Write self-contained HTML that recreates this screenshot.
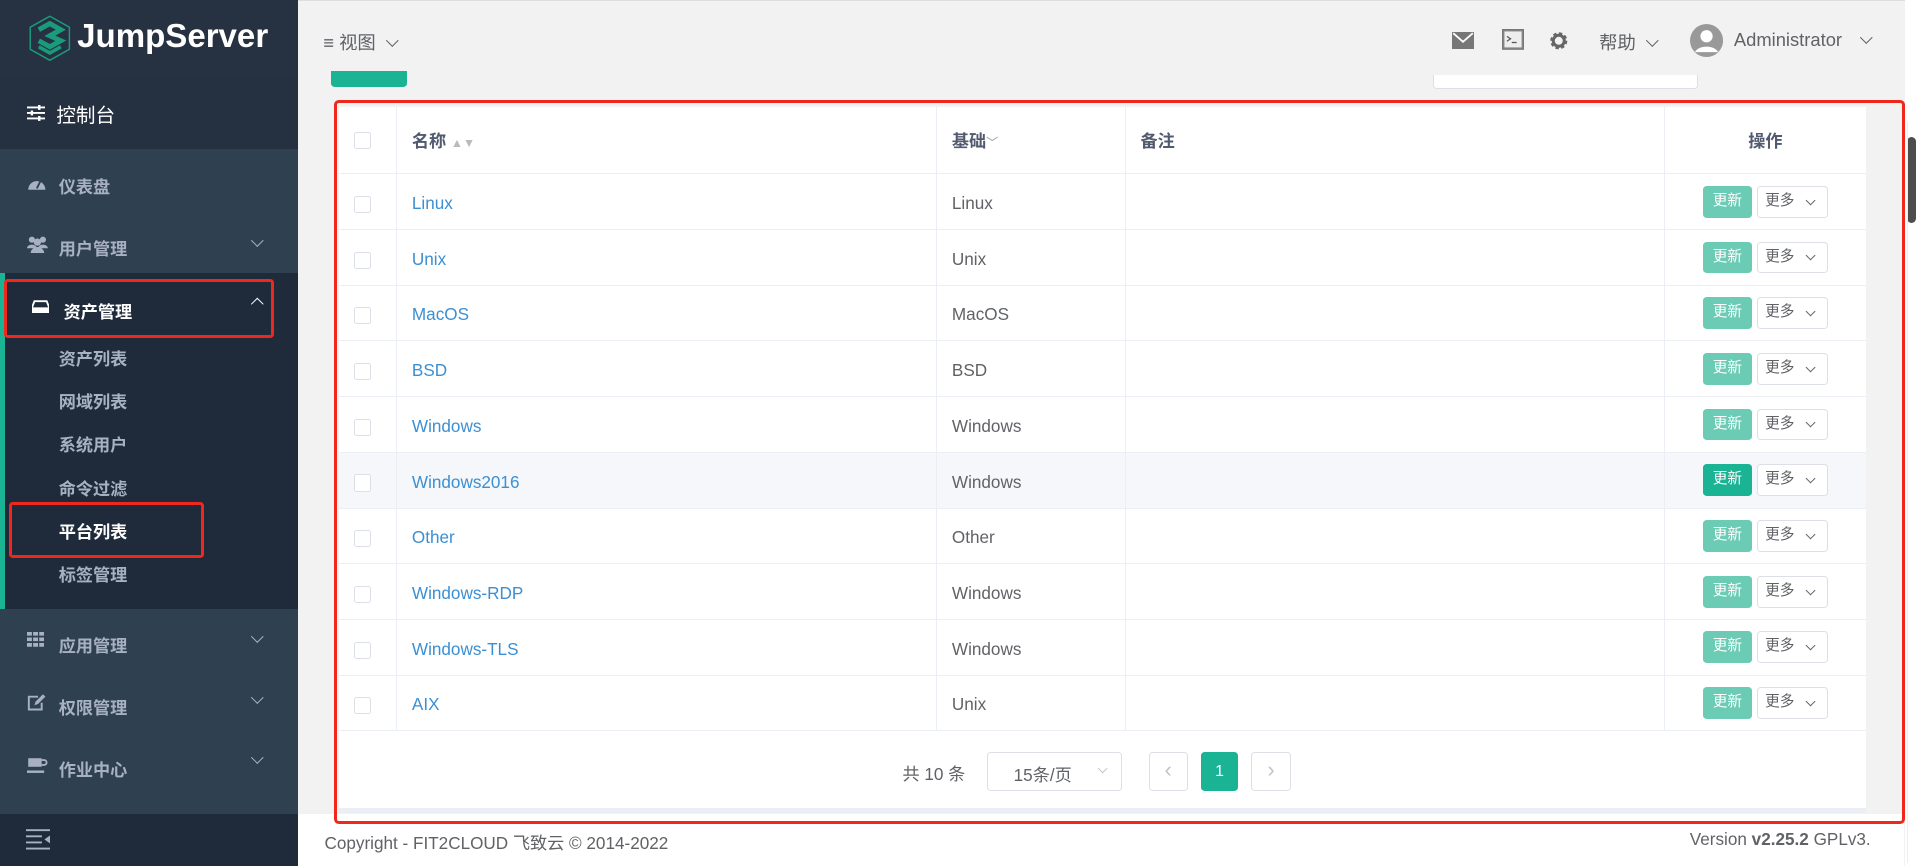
<!DOCTYPE html>
<html><head><meta charset="utf-8">
<style>
*{box-sizing:border-box;margin:0;padding:0}
html,body{width:1920px;height:866px;overflow:hidden;background:#f2f2f2}
#w{position:absolute;left:0;top:0;width:1568px;height:707px;zoom:1.22449;font-family:"Liberation Sans","Noto Sans CJK SC",sans-serif;font-size:14px;color:#606266;background:#f2f2f2}
.a{position:absolute}
#side{left:0;top:0;width:243px;height:707px;background:#2f4050}
.mi{position:absolute;left:48px;font-size:14px;font-weight:bold;color:#a7b1c2}
.ic{position:absolute;left:22px}
.sub{position:absolute;left:48px;font-size:14px;font-weight:bold;color:#a7b1c2}
.chev{position:absolute;left:207px;width:7px;height:7px;border-right:1.2px solid #a7b1c2;border-bottom:1.2px solid #a7b1c2;transform:rotate(45deg)}
.hc{display:inline-block;width:7px;height:7px;border-right:1.2px solid #606266;border-bottom:1.2px solid #606266;transform:rotate(45deg);margin-left:10px;position:relative;top:-4px}
table{border-collapse:collapse;position:absolute;left:277px;top:87px;width:1247px;background:#fff}
td,th{border-bottom:1px solid #ebeef5;height:45.5px;text-align:left;padding-left:12px;font-size:14px;vertical-align:middle;padding-top:3px}
th{height:55px;font-weight:bold;color:#515a6e;padding-top:0}
td.b,th.b{border-left:1px solid #ebeef5}
.cb{display:inline-block;width:14px;height:14px;border:1px solid #dcdfe6;border-radius:2px;background:#fff;vertical-align:middle}
a{color:#3b8fd2;text-decoration:none}
.up{display:inline-block;width:40px;height:26px;line-height:26px;text-align:center;background:#6ccbb4;color:#fff;border-radius:3px;font-size:12px;vertical-align:middle}
.more{display:inline-block;width:58px;height:26px;line-height:24px;border:1px solid #dcdfe6;border-radius:3px;font-size:12px;padding-left:6px;vertical-align:middle;margin-left:4px;position:relative;color:#606266;text-align:left;white-space:nowrap}
.more:after{content:"";position:absolute;right:10px;top:8px;width:5px;height:5px;border-right:1px solid #606266;border-bottom:1px solid #606266;transform:rotate(45deg)}
</style></head><body><div id="w">
<div id="side" class="a">
 <div class="a" style="left:0;top:0;width:243px;height:62px;background:#263142"></div>
 <div class="a" style="left:0;top:62px;width:243px;height:60px;background:#253041"></div>
 <svg class="a" style="left:24px;top:12px" width="34" height="38" viewBox="0 0 34 38"><polygon points="17,1 33,10 33,28 17,37 1,28 1,10" fill="none" stroke="#1a9b7c" stroke-width="1.2"/><path d="M8 12 L17 7 L26 12 L17 17 L26 21 L17 26 L8 21" fill="none" stroke="#1a9b7c" stroke-width="4"/><path d="M8 26 L17 31 L26 26" fill="none" stroke="#1a9b7c" stroke-width="3"/></svg>
 <div class="a" style="left:63px;top:15px;font-size:27px;font-weight:bold;color:#fff">JumpServer</div>
 <svg class="a" style="left:22px;top:86px" width="15" height="13"><path d="M0 2h15M0 6.5h15M0 11h15" stroke="#fff" stroke-width="1.5"/><rect x="9" y="0" width="2" height="4" fill="#fff"/><rect x="3" y="4.5" width="2" height="4" fill="#fff"/><rect x="9" y="9" width="2" height="4" fill="#fff"/></svg>
 <div class="a" style="left:46px;top:81px;color:#fff;font-size:16px">控制台</div>
 <svg class="ic" style="top:143px" width="16" height="13"><path d="M1 12a7 7 0 0 1 14 0z" fill="#a7b1c2"/><path d="M8 11l3-6" stroke="#2f4050" stroke-width="1.5"/></svg><div class="mi" style="top:141px">仪表盘</div>
 <svg class="ic" style="top:193px" width="17" height="14"><circle cx="4" cy="3" r="2.5" fill="#a7b1c2"/><circle cx="13" cy="3" r="2.5" fill="#a7b1c2"/><circle cx="8.5" cy="5" r="3" fill="#a7b1c2"/><path d="M0 10a4 3 0 0 1 8 0zM9 10a4 3 0 0 1 8 0zM3 14a5.5 5 0 0 1 11 0z" fill="#a7b1c2"/></svg><div class="mi" style="top:192px">用户管理</div><div class="chev" style="top:193px"></div>
 <div class="a" style="left:0;top:223px;width:243px;height:274px;background:#1f2b3b"></div>
 <div class="a" style="left:0;top:223px;width:4px;height:274px;background:#1ab394"></div>
 <svg class="a" style="left:26px;top:245px" width="14" height="11"><path d="M2 1h10l2 5v5H0V6z" fill="none" stroke="#fff" stroke-width="1.5"/><rect x="0" y="6" width="14" height="5" fill="#fff"/></svg>
 <div class="a" style="left:52px;top:243px;font-weight:bold;color:#fff">资产管理</div>
 <div class="chev" style="top:245px;transform:rotate(-135deg);border-color:#fff"></div>
 <div class="a" style="left:3px;top:228px;width:221px;height:48px;border:3px solid #f0271c;border-radius:3px"></div>
 <div class="sub" style="top:282px">资产列表</div>
 <div class="sub" style="top:317px">网域列表</div>
 <div class="sub" style="top:352px">系统用户</div>
 <div class="sub" style="top:388px">命令过滤</div>
 <div class="sub" style="top:423px;color:#fff">平台列表</div>
 <div class="a" style="left:7px;top:410px;width:160px;height:46px;border:3px solid #f0271c;border-radius:3px"></div>
 <div class="sub" style="top:458px">标签管理</div>
 <svg class="ic" style="top:516px" width="14" height="12"><path d="M0 0h4v3H0zM5 0h4v3H5zM10 0h4v3h-4zM0 4.5h4v3H0zM5 4.5h4v3H5zM10 4.5h4v3h-4zM0 9h4v3H0zM5 9h4v3H5zM10 9h4v3h-4z" fill="#a7b1c2"/></svg><div class="mi" style="top:516px">应用管理</div><div class="chev" style="top:516px"></div>
 <svg class="ic" style="top:566px" width="16" height="15"><path d="M9 3H1.5v10.5H12V8" fill="none" stroke="#a7b1c2" stroke-width="1.6"/><path d="M6 10l1-3 6-6 2 2-6 6z" fill="#a7b1c2"/></svg><div class="mi" style="top:567px">权限管理</div><div class="chev" style="top:566px"></div>
 <svg class="ic" style="top:618px" width="17" height="14"><path d="M1 1h11v7H1z" fill="#a7b1c2"/><path d="M12 2.5h2a2 2 0 0 1 0 4h-2" fill="none" stroke="#a7b1c2" stroke-width="1.5"/><rect x="0" y="11" width="14" height="2" fill="#a7b1c2"/></svg><div class="mi" style="top:617px">作业中心</div><div class="chev" style="top:615px"></div>
 <div class="a" style="left:0;top:665px;width:243px;height:42px;background:#1f2a3a"></div>
 <svg class="a" style="left:21px;top:677px" width="20" height="17"><path d="M0 1h20M0 6h13M0 11h13M0 16h20" stroke="#a7b1c2" stroke-width="1.5"/><path d="M20 5v7l-5-3.5z" fill="#a7b1c2"/></svg>
</div>
<div class="a" style="left:243px;top:0;width:1325px;height:1px;background:#ddd"></div>
<div class="a" style="left:264px;top:24px;font-size:15px;color:#606266">≡ 视图<span class="hc"></span></div>
<svg class="a" style="left:1186px;top:26px" width="18" height="14"><rect width="18" height="14" fill="#777"/><path d="M1 1l8 7 8-7" stroke="#fff" fill="none" stroke-width="1.5"/></svg>
<svg class="a" style="left:1227px;top:24px" width="18" height="17"><rect x="0.5" y="0.5" width="17" height="16" fill="#888" stroke="#777"/><rect x="2" y="2" width="14" height="13" fill="#eee"/><path d="M4 6l3 2-3 2M8 11h4" stroke="#555" fill="none"/></svg>
<svg class="a" style="left:1265px;top:25px" width="16" height="16" viewBox="0 0 16 16"><circle cx="8" cy="8" r="5.5" fill="none" stroke="#666" stroke-width="3" stroke-dasharray="2.5 1.8"/><circle cx="8" cy="8" r="4.5" fill="none" stroke="#666" stroke-width="2.5"/></svg>
<div class="a" style="left:1306px;top:24px;font-size:15px">帮助<span class="hc"></span></div>
<svg class="a" style="left:1380px;top:20px" width="27" height="27"><circle cx="13.5" cy="13.5" r="13.5" fill="#999"/><circle cx="13.5" cy="10" r="5" fill="#fff"/><path d="M4 23c3-6 16-6 19 0" fill="#fff"/></svg>
<div class="a" style="left:1416px;top:24px;font-size:15px">Administrator<span class="hc" style="margin-left:16px"></span></div>
<div class="a" style="left:270px;top:58px;width:62px;height:13px;background:#1ab394;border-radius:0 0 3px 3px"></div>
<div class="a" style="left:1170px;top:61px;width:217px;height:12px;background:#fff;border:1px solid #dcdfe6;border-top:none;border-radius:0 0 3px 3px"></div>
<div class="a" style="left:277px;top:87px;width:1247px;height:573px;background:#fff"></div>
<table>
<tr><th style="width:47px;padding-left:12px"><span class="cb"></span></th><th class="b" style="width:441px">名称 <span style="color:#bbb;font-size:10px">▲▼</span></th><th class="b" style="width:154px">基础<span style="font-weight:normal;color:#999;font-size:10px">﹀</span></th><th class="b">备注</th><th class="b" style="width:165px;text-align:center;padding:0">操作</th></tr>
<tr><td><span class="cb"></span></td><td class="b"><a>Linux</a></td><td class="b">Linux</td><td class="b"></td><td class="b" style="text-align:center;padding:0"><span class="up">更新</span><span class="more">更多</span></td></tr>
<tr><td><span class="cb"></span></td><td class="b"><a>Unix</a></td><td class="b">Unix</td><td class="b"></td><td class="b" style="text-align:center;padding:0"><span class="up">更新</span><span class="more">更多</span></td></tr>
<tr><td><span class="cb"></span></td><td class="b"><a>MacOS</a></td><td class="b">MacOS</td><td class="b"></td><td class="b" style="text-align:center;padding:0"><span class="up">更新</span><span class="more">更多</span></td></tr>
<tr><td><span class="cb"></span></td><td class="b"><a>BSD</a></td><td class="b">BSD</td><td class="b"></td><td class="b" style="text-align:center;padding:0"><span class="up">更新</span><span class="more">更多</span></td></tr>
<tr><td><span class="cb"></span></td><td class="b"><a>Windows</a></td><td class="b">Windows</td><td class="b"></td><td class="b" style="text-align:center;padding:0"><span class="up">更新</span><span class="more">更多</span></td></tr>
<tr style="background:#f5f7fa"><td><span class="cb"></span></td><td class="b"><a>Windows2016</a></td><td class="b">Windows</td><td class="b"></td><td class="b" style="text-align:center;padding:0"><span class="up" style="background:#1ab394">更新</span><span class="more" style="background:#fff">更多</span></td></tr>
<tr><td><span class="cb"></span></td><td class="b"><a>Other</a></td><td class="b">Other</td><td class="b"></td><td class="b" style="text-align:center;padding:0"><span class="up">更新</span><span class="more">更多</span></td></tr>
<tr><td><span class="cb"></span></td><td class="b"><a>Windows-RDP</a></td><td class="b">Windows</td><td class="b"></td><td class="b" style="text-align:center;padding:0"><span class="up">更新</span><span class="more">更多</span></td></tr>
<tr><td><span class="cb"></span></td><td class="b"><a>Windows-TLS</a></td><td class="b">Windows</td><td class="b"></td><td class="b" style="text-align:center;padding:0"><span class="up">更新</span><span class="more">更多</span></td></tr>
<tr><td><span class="cb"></span></td><td class="b"><a>AIX</a></td><td class="b">Unix</td><td class="b"></td><td class="b" style="text-align:center;padding:0"><span class="up">更新</span><span class="more">更多</span></td></tr>
</table>
<div class="a" style="left:737px;top:621px;font-size:14px">共 10 条</div>
<div class="a" style="left:806px;top:614px;width:110px;height:32px;border:1px solid #dcdfe6;border-radius:3px;padding:7px 0 0 21px">15条/页<span style="position:absolute;right:12px;top:10px;width:6px;height:6px;border-right:1px solid #c0c4cc;border-bottom:1px solid #c0c4cc;transform:rotate(45deg)"></span></div>
<div class="a" style="left:938px;top:614px;width:32px;height:32px;border:1px solid #dcdfe6;border-radius:3px;text-align:center;line-height:28px;color:#c0c4cc;font-size:18px">‹</div>
<div class="a" style="left:981px;top:614px;width:30px;height:32px;background:#1ab394;border-radius:3px;text-align:center;line-height:32px;color:#fff;font-size:13px">1</div>
<div class="a" style="left:1022px;top:614px;width:32px;height:32px;border:1px solid #dcdfe6;border-radius:3px;text-align:center;line-height:28px;color:#c0c4cc;font-size:18px">›</div>
<div class="a" style="left:277px;top:660px;width:1247px;height:4px;background:#ebeef5"></div>
<div class="a" style="left:243px;top:665px;width:1312px;height:42px;background:#fff"></div>
<div class="a" style="left:265px;top:677px;font-size:14px">Copyright - FIT2CLOUD 飞致云 © 2014-2022</div>
<div class="a" style="left:1380px;top:677px;font-size:14px">Version <b>v2.25.2</b> GPLv3.</div>
<div class="a" style="left:273px;top:82px;width:1283px;height:591px;border:3px solid #f0271c;border-radius:4px"></div>
<div class="a" style="left:1556px;top:0;width:12px;height:707px;background:#fff"></div>
<div class="a" style="left:1557px;top:112px;width:8px;height:70px;background:#4d4d4d;border-radius:4px"></div>
<div class="a" style="left:1557px;top:100px;width:8px;height:605px;border-left:1px solid #eee"></div>
</div></body></html>
